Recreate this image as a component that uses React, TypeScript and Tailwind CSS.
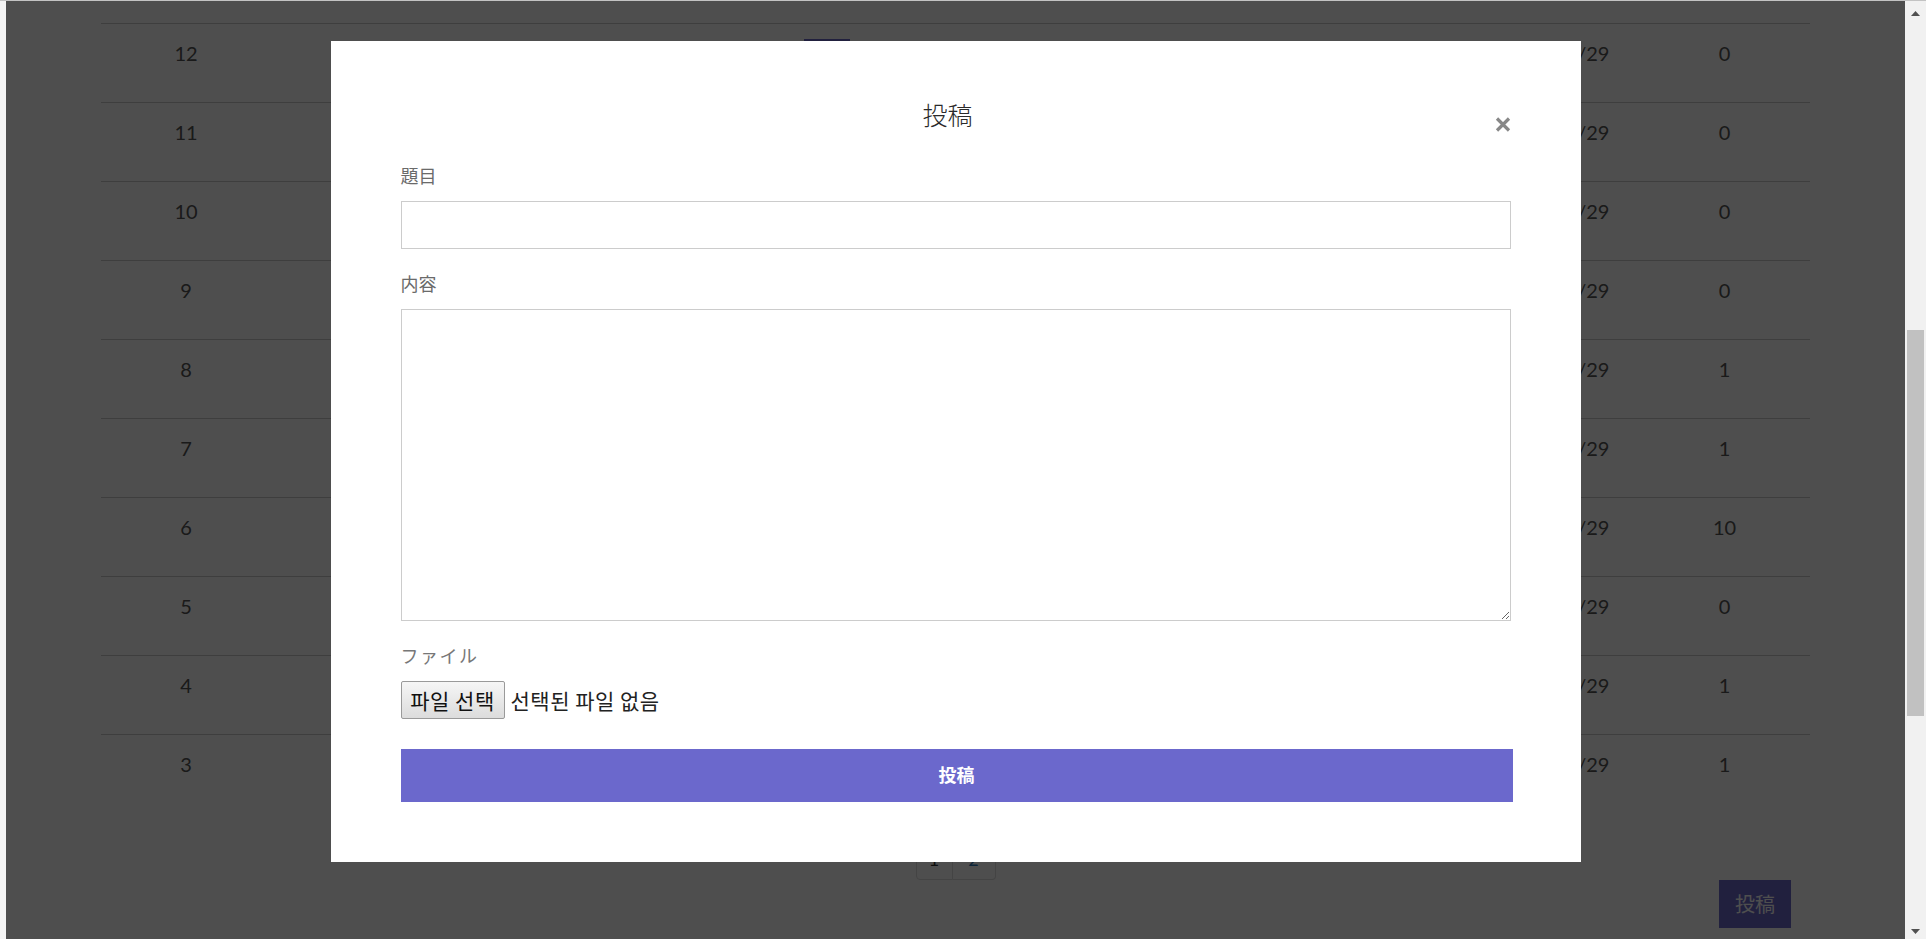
import React from 'react';

const rows = [
  { no: 12, date: '2021/09/29', views: '0' },
  { no: 11, date: '2021/09/29', views: '0' },
  { no: 10, date: '2021/09/29', views: '0' },
  { no: 9, date: '2021/09/29', views: '0' },
  { no: 8, date: '2021/09/29', views: '1' },
  { no: 7, date: '2021/09/29', views: '1' },
  { no: 6, date: '2021/09/29', views: '10' },
  { no: 5, date: '2021/09/29', views: '0' },
  { no: 4, date: '2021/09/29', views: '1' },
  { no: 3, date: '2021/09/29', views: '1' },
];

function Row({ r, last, first }: { r: (typeof rows)[number]; last: boolean; first: boolean }) {
  return (
    <div
      className={
        last
          ? 'grid grid-cols-[170px_1fr_170px_171px] h-[79px] text-[20px] leading-[28px]'
          : 'grid grid-cols-[170px_1fr_170px_171px] h-[79px] text-[20px] leading-[28px] border-b border-[#cccccc]'
      }
    >
      <div className="pt-[15px] text-center">{r.no}</div>
      <div className="pt-[15px]">
        {first ? <div className="ml-[533px] w-[46px] h-[30px] bg-[#6b68cc]" /> : null}
      </div>
      <div className="pt-[15px] text-center">{r.date}</div>
      <div className="pt-[15px] text-center">{r.views}</div>
    </div>
  );
}

export default function App() {
  return (
    <div className="w-[1926px] h-[939px] overflow-hidden flex flex-col bg-white">
      <div className="h-px bg-[#c3c3c3] shrink-0" />
      <div className="flex flex-1 min-h-0">
        <div className="w-[6px] bg-[#f4f4f4] shrink-0" />
        <div className="relative flex-1 overflow-hidden bg-white font-['Lato',sans-serif] text-[#555555]">
          <div className="w-[1709px] mx-auto">
            <div className="h-[23px] border-b border-[#cccccc]" />
            {rows.map((r, i) => (
              <Row key={r.no} r={r} first={i === 0} last={i === rows.length - 1} />
            ))}
            <div className="mt-[25px] flex justify-center">
              <div className="flex h-[41px] text-[18px]">
                <div className="w-[37px] border border-[#dddddd] rounded-l-[4px] flex items-center justify-center text-[#333333]">
                  1
                </div>
                <div className="w-[43px] border border-l-0 border-[#dddddd] rounded-r-[4px] flex items-center justify-center text-[#337ab7]">
                  2
                </div>
              </div>
            </div>
            <div className="flex justify-end pr-[19px]">
              <button
                type="button"
                className="w-[72px] h-[48px] bg-[#6b68cc] text-white text-[20px] font-['Noto_Sans_CJK_JP',sans-serif] flex items-center justify-center"
              >
                投稿
              </button>
            </div>
          </div>

          <div className="absolute inset-0 bg-[rgba(0,0,0,0.694)] flex justify-center items-start pt-[40px]">
            <div className="w-[1250px] h-[821px] bg-white px-[70px] pt-[57px] flex flex-col font-['Noto_Sans_CJK_JP',sans-serif]">
              <div className="flex items-start h-[32px]">
                <h2 className="flex-1 text-center text-[25px] leading-[32px] font-light text-[#2a2a2a]">投稿</h2>
                <button type="button" className="w-[16px] h-[32px] pt-[19px] flex flex-col justify-start overflow-visible" aria-label="close">
                  <svg width="16" height="15" viewBox="0 0 16 15" className="block shrink-0">
                    <path d="M2 1.5 L14 13.5 M14 1.5 L2 13.5" stroke="#888888" strokeWidth="3.2" fill="none" />
                  </svg>
                </button>
              </div>

              <label className="mt-[32px] block text-[18px] leading-[26px] text-[#6a6a6a]">題目</label>
              <input
                type="text"
                className="mt-[13px] block w-full h-[48px] border border-[#cccccc] bg-white outline-none px-3 text-[18px]"
              />

              <label className="mt-[21px] block text-[18px] leading-[26px] text-[#6a6a6a]">内容</label>
              <textarea className="mt-[13px] block w-full h-[312px] border border-[#cccccc] bg-white outline-none p-3 text-[18px]" />

              <label className="mt-[21px] block text-[18px] leading-[26px] tracking-[1.5px] text-[#777777]">ファイル</label>
              <div className="mt-[13px] flex items-center h-[38px] font-['Noto_Sans_CJK_KR',sans-serif] text-[21px]">
                <button
                  type="button"
                  className="w-[104px] h-[38px] border border-[#9a9a9a] rounded-[2px] bg-linear-to-b from-[#f6f6f6] to-[#dcdcdc] text-[#111111] flex items-center justify-center leading-none tracking-[0.5px]"
                >
                  파일 선택
                </button>
                <span className="ml-[6px] text-[#222222] leading-none tracking-[0.5px]">선택된 파일 없음</span>
              </div>

              <button
                type="button"
                className="mt-[30px] w-[1112px] h-[53px] pb-[3px] bg-[#6b68cc] text-white text-[18px] font-bold flex items-center justify-center"
              >
                投稿
              </button>
            </div>
          </div>
        </div>
        <div className="w-[21px] bg-[#f1f1f1] shrink-0 flex flex-col items-center">
          <svg width="9" height="5" viewBox="0 0 9 5" className="mt-[10px] block">
            <path d="M0 5 L4.5 0 L9 5 Z" fill="#505050" />
          </svg>
          <div className="mt-[314px] w-[17px] h-[386px] bg-[#c1c1c1]" />
          <div className="flex-1" />
          <svg width="9" height="5" viewBox="0 0 9 5" className="mb-[5px] block">
            <path d="M0 0 L9 0 L4.5 5 Z" fill="#505050" />
          </svg>
        </div>
      </div>
    </div>
  );
}
